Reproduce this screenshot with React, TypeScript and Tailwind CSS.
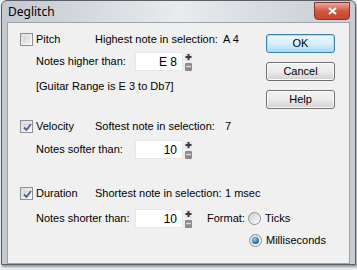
import React from "react";

const font = { fontFamily: '"Liberation Sans", Arial, sans-serif' };

function Checkbox({ checked }: { checked?: boolean }) {
  return (
    <div className="w-[13px] h-[13px] border border-[#8e8f8f] bg-gradient-to-br from-[#dcdcdc] to-[#fbfbfb] p-[2px] shrink-0">
      <div className="w-full h-full bg-gradient-to-br from-[#cbcfd5] to-[#f6f6f6] border border-[#e0e0e0] relative">
        {checked && (
          <svg viewBox="0 0 9 9" className="absolute left-[-1px] top-[-1px] w-[9px] h-[9px]">
            <path d="M1 4.5 L3.5 7 L8 1" stroke="#4a5f97" strokeWidth="1.8" fill="none" />
          </svg>
        )}
      </div>
    </div>
  );
}

function Radio({ checked }: { checked?: boolean }) {
  return (
    <div className="w-[13px] h-[13px] rounded-full border border-[#8e8f8f] bg-gradient-to-br from-[#d4d4d4] to-[#fbfbfb] flex items-center justify-center shrink-0">
      <div className="w-[9px] h-[9px] rounded-full bg-gradient-to-br from-[#d0d4da] to-[#f8f8f8] flex items-center justify-center">
        {checked && <div className="w-[7px] h-[7px] rounded-full bg-[radial-gradient(circle_at_40%_35%,#8fd0f5,#1f5f9e_70%,#173f6e)]" />}
      </div>
    </div>
  );
}

function Spinner() {
  return (
    <svg width="7" height="18" viewBox="0 0 7 18" className="shrink-0">
      <rect x="0" y="0" width="7" height="8" fill="#e6e6e6" />
      <path d="M3.5 1 V7 M0.5 4 H6.5" stroke="#3a3a3a" strokeWidth="2" />
      <rect x="0" y="10" width="7" height="8" rx="1" fill="#8a8a8a" />
      <path d="M1 13.5 H6" stroke="#d8d8d8" strokeWidth="1.5" />
    </svg>
  );
}

function Field({ value }: { value: string }) {
  return (
    <div className="flex items-center gap-[2px] shrink-0">
      <div className="w-[48px] h-[19px] bg-white border border-[#e6e6e6] flex items-center justify-end pr-[5px] text-[12px] text-black">
        {value}
      </div>
      <Spinner />
    </div>
  );
}

function Button({ label, primary }: { label: string; primary?: boolean }) {
  return (
    <div
      className={
        "w-[69px] h-[19px] rounded-[3px] border flex items-center justify-center text-[11px] text-black " +
        (primary
          ? "border-[#3c7fb1] bg-gradient-to-b from-[#eaf6fd] via-[#d9f0fc] to-[#a7d9f5] shadow-[inset_0_0_0_1px_#9ee4f7]"
          : "border-[#707070] bg-gradient-to-b from-[#f2f2f2] via-[#ebebeb] to-[#d0d0d0] shadow-[inset_0_0_0_1px_#fcfcfc]")
      }
    >
      {label}
    </div>
  );
}

export default function App() {
  return (
    <div className="w-[357px] h-[270px] bg-[#e9ecef]">
      <div className="w-[355px] h-[265px] ml-[1px] rounded-t-[6px] border border-[#5a5f66] bg-gradient-to-r from-[#c3c9d0] via-[#e9ebed] to-[#c6ccd3] flex flex-col shadow-[1px_2px_2px_rgba(0,0,0,0.35)]">
        <div className="h-[21px] flex items-center justify-between pl-[6px] pr-[5px] shrink-0">
          <span className="text-[12px] text-black mt-[1px]" style={{ fontFamily: '"Noto Sans", "Open Sans", sans-serif' }}>
            Deglitch
          </span>
          <div className="w-[36px] h-[18px] -mt-[2px] rounded-b-[4px] border border-[#7a3a32] bg-gradient-to-b from-[#e9a99c] via-[#d2553f] to-[#c7452e] flex items-center justify-center">
            <svg width="9" height="8" viewBox="0 0 9 8">
              <path d="M1 1 L8 7 M8 1 L1 7" stroke="#ffffff" strokeWidth="2" />
            </svg>
          </div>
        </div>
        <div
          className="mx-[5px] h-[242px] bg-[#f0f0f0] border border-[#9ca3ab] flex pt-[9px]"
          style={font}
        >
          <div className="w-[258px] shrink-0 flex flex-col pl-[12px] text-[11px] text-black whitespace-nowrap">
            <div className="h-[14px] flex items-center">
              <Checkbox />
              <span className="ml-[3px] w-[59px] shrink-0">Pitch</span>
              <span className="w-[128px] shrink-0">Highest note in selection:</span>
              <span>A 4</span>
            </div>
            <div className="h-[19px] mt-[6px] flex items-center pl-[16px]">
              <span className="w-[99px] shrink-0">Notes higher than:</span>
              <Field value="E 8" />
            </div>
            <div className="h-[14px] mt-[8px] flex items-center pl-[16px]">[Guitar Range is E 3 to Db7]</div>
            <div className="h-[14px] mt-[26px] flex items-center">
              <Checkbox checked />
              <span className="ml-[3px] w-[59px] shrink-0">Velocity</span>
              <span className="w-[130px] shrink-0">Softest note in selection:</span>
              <span>7</span>
            </div>
            <div className="h-[19px] mt-[7px] flex items-center pl-[16px]">
              <span className="w-[99px] shrink-0">Notes softer than:</span>
              <Field value="10" />
            </div>
            <div className="h-[14px] mt-[27px] flex items-center">
              <Checkbox checked />
              <span className="ml-[3px] w-[59px] shrink-0">Duration</span>
              <span className="w-[130px] shrink-0">Shortest note in selection:</span>
              <span>1 msec</span>
            </div>
            <div className="h-[19px] mt-[9px] flex items-center pl-[16px]">
              <span className="w-[99px] shrink-0">Notes shorter than:</span>
              <Field value="10" />
              <span className="ml-[15px] w-[41px] shrink-0">Format:</span>
              <Radio />
              <span className="ml-[4px]">Ticks</span>
            </div>
            <div className="h-[14px] mt-[5px] flex items-center pl-[229px]">
              <Radio checked />
              <span className="ml-[4px]">Milliseconds</span>
            </div>
          </div>
          <div className="flex flex-col gap-[9px] pt-[2px]">
            <Button label="OK" primary />
            <Button label="Cancel" />
            <Button label="Help" />
          </div>
        </div>
      </div>
    </div>
  );
}
